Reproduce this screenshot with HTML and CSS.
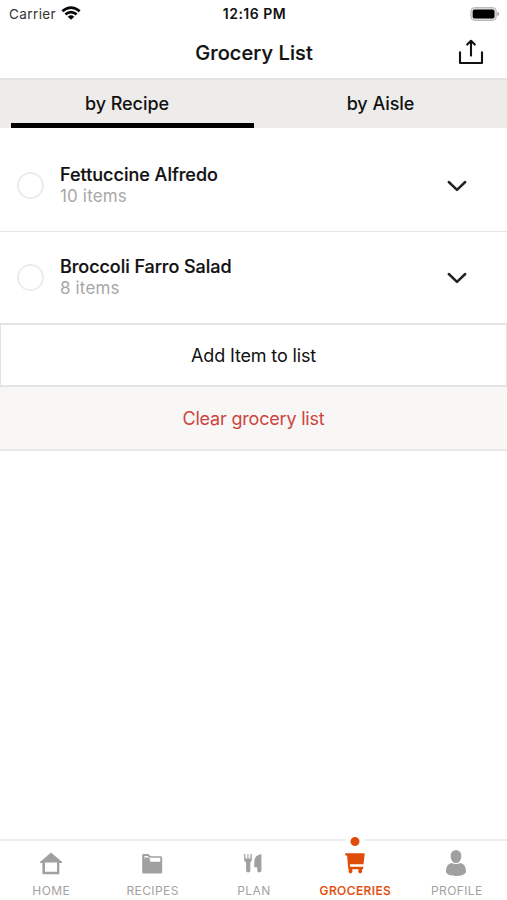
FILE: index.html
```html
<!DOCTYPE html>
<html lang="en">
<head>
<meta charset="utf-8">
<title>Grocery List</title>
<link rel="stylesheet" href="styles.css">
</head>
<body>
<div class="app">
  <div class="status">
    <div class="carrier"><span>Carrier</span>
      <svg width="20" height="14" viewBox="0 0 20 14" fill="none" stroke="#080808" stroke-width="2.7"><path d="M1.3 5.3Q10-2 18.7 5.3M4.4 8.4Q10 3.9 15.6 8.4"/><path d="M10 13.7 6.7 10.7Q10 8 13.3 10.7Z" fill="#080808" stroke="none"/></svg>
    </div>
    <span class="clock">12:16 PM</span>
    <svg class="battery" width="30" height="14" viewBox="0 0 30 14"><rect x=".9" y=".6" width="25.4" height="12.8" rx="3.7" fill="#ddd" stroke="#b5b5b5"/><rect x="2.7" y="2.4" width="21.8" height="9.2" rx="2" fill="#000"/><path d="M27.4 4.8Q29.4 5.4 29.4 7T27.4 9.2Z" fill="#aaa"/></svg>
  </div>
  <header class="header">
    <h1>Grocery List</h1>
    <svg class="share" width="26" height="26" viewBox="0 0 26 26" fill="none" stroke="#111" stroke-width="2.1" stroke-linecap="round" stroke-linejoin="round"><path d="M2 13.3V24H24V13.3M13 16.6V2.3M9.2 5.6 13 1.8 16.8 5.6"/></svg>
  </header>
  <nav class="tabs">
    <div class="tab active"><span>by Recipe</span></div>
    <div class="tab"><span>by Aisle</span></div>
  </nav>
  <main>
    <section class="recipe first">
      <span class="check"></span>
      <div class="info"><h2>Fettuccine Alfredo</h2><p>10 items</p></div>
      <svg class="chevron" width="20" height="12" viewBox="0 0 20 12"><path d="M1.8 2 10 9.9 18.2 2"/></svg>
    </section>
    <section class="recipe">
      <span class="check"></span>
      <div class="info"><h2>Broccoli Farro Salad</h2><p>8 items</p></div>
      <svg class="chevron" width="20" height="12" viewBox="0 0 20 12"><path d="M1.8 2 10 9.9 18.2 2"/></svg>
    </section>
    <div class="add"><span>Add Item to list</span></div>
    <div class="clear"><span>Clear grocery list</span></div>
  </main>
  <nav class="bottom">
    <div class="item">
      <svg width="24" height="28" viewBox="0 0 24 28"><path d="M12 2.5 23.2 12V13H20.3V24.3H3.4V13H1V12ZM6 12.5V21.8H18V12.5Z" fill="#a0a0a0" fill-rule="evenodd"/></svg>
      <span>HOME</span>
    </div>
    <div class="item">
      <svg width="24" height="28" viewBox="0 0 24 28"><path d="M2.2 5.2Q2.2 4 3.4 4H8.2L10.7 6.2H20.6Q22.2 6.2 22.2 7.8V22.3Q22.2 23.5 20.8 23.5H3.4Q2.2 23.5 2.2 22.3Z" fill="#a0a0a0"/><path d="M4.4 6H7.6L9.6 7.8H20.3V11.8H11L9 10H4.4Z" fill="#fff"/><path d="M4.4 7.4H8.5L10.5 9.3 8.9 10.7H4.4Z" fill="#a0a0a0"/></svg>
      <span>RECIPES</span>
    </div>
    <div class="item">
      <svg width="24" height="28" viewBox="0 0 24 28" fill="#a0a0a0"><path d="M3.1 4H4.4V8.5H6.4V4H7.5V8.5H9.4V4H10.8V9.3Q10.8 12 9.3 12.7V20.7Q9.3 22.5 7.2 22.5T5.1 20.7V12.7Q3.1 12 3.1 9.3ZM20.4 4V20.7Q20.4 22.5 18.3 22.5T16.2 20.7V17.3H13.3V12Q13.3 5 20.4 4Z"/></svg>
      <span>PLAN</span>
    </div>
    <div class="item selected">
      <i class="dot"></i>
      <svg width="24" height="28" viewBox="0 0 24 28" fill="#df4e08"><path d="M2.2 3.3H21.1Q21.8 3.3 21.7 4L20.5 14.2H6.9L7.2 16.8H20.3V19.2H18.9V20.3A2 2 0 1 1 15.5 20.3V19.2H9.2V20.3A2 2 0 1 1 5.8 20.3V19.2H5.3L4.1 5.5H2.2Z"/></svg>
      <span>GROCERIES</span>
    </div>
    <div class="item">
      <svg width="24" height="28" viewBox="0 0 24 28" fill="#a0a0a0"><path d="M12 .2C15.5.2 17.5 2.7 17.3 6.2 17.1 10.2 15 13 12 13S6.9 10.2 6.7 6.2C6.5 2.7 8.5.2 12 .2ZM7.6 13.1Q12 15 16.4 13.1C20 13.8 22 17 22 21.3 22 24.2 18 26 12 26S2 24.2 2 21.3C2 17 4 13.8 7.6 13.1Z"/></svg>
      <span>PROFILE</span>
    </div>
  </nav>
</div>
</body>
</html>
```
FILE: styles.css
```css
* { box-sizing: border-box; margin: 0; }
body { background: #fff; color: #111; font-family: Inter, "Liberation Sans", sans-serif; }
.app { height: 900px; display: flex; flex-direction: column; overflow: hidden; }
span, h1, h2, p { white-space: nowrap; }
.status { height: 28px; flex: none; display: grid; grid-template-columns: 1fr auto 1fr; align-items: center; padding: 0 7px 1px 9px; font-size: 13.5px; }
.carrier { display: flex; align-items: center; gap: 5px; color: #333; letter-spacing: .4px; }
.carrier svg { margin-top: -2px; }
.clock { font-weight: 600; font-size: 14px; letter-spacing: .5px; }
.battery { justify-self: end; }
.header { height: 52px; flex: none; display: grid; grid-template-columns: 1fr auto 1fr; align-items: center; padding: 0 23px 3px; border-bottom: 2px solid #e3e3e3; }
.header h1 { grid-column: 2; font-size: 20px; font-weight: 500; letter-spacing: .1px; padding: 2px 0 0 1px; -webkit-text-stroke: .2px #111; }
.share { justify-self: end; }
.tabs { height: 48px; flex: none; display: grid; grid-template-columns: 243px 1fr; padding-left: 11px; background: #edecea; }
.tab { display: flex; justify-content: center; padding-top: 12px; font-size: 18px; line-height: 24px; font-weight: 500; letter-spacing: -.05px; border-bottom: 5px solid transparent; }
.tab.active { border-color: #000; padding-right: 11px; }
main { flex: 1; }
.recipe { height: 91px; display: flex; align-items: center; padding: 0 40px 0 17px; }
.recipe.first { height: 104px; padding-top: 12px; border-bottom: 1px solid #e5e5e5; }
.check { width: 27px; height: 27px; border: 2px solid #eeecea; border-radius: 50%; margin-right: 16px; }
.info { flex: 1; margin-top: -2px; }
.info h2 { font-size: 18px; line-height: 23px; font-weight: 500; -webkit-text-stroke: .2px #111; }
.recipe:not(.first) h2 { letter-spacing: -.05px; }
.info p { color: #a8a8a8; font-size: 17px; line-height: 20px; letter-spacing: .15px; }
.chevron { fill: none; stroke: #222; stroke-width: 2.5; stroke-linecap: round; stroke-linejoin: round; }
.add, .clear { height: 64px; display: flex; align-items: center; justify-content: center; font-size: 18px; letter-spacing: -.15px; }
.add { border: 2px solid #e5e4e4; border-width: 2px 1px; }
.clear { color: #cb4540; background: #f8f7f5; border-bottom: 2px solid #e9e9e8; letter-spacing: -.2px; }
.bottom { height: 61px; flex: none; display: grid; grid-template-columns: repeat(5, 1fr); border-top: 2px solid #ececec; }
.item { display: flex; flex-direction: column; align-items: center; padding-top: 9px; position: relative; color: #a2a2a2; font-size: 12px; letter-spacing: .4px; }
.item span { line-height: 16px; margin-top: 5px; padding-left: 1px; }
.selected { color: #df4e08; font-weight: 500; -webkit-text-stroke: .15px #df4e08; }
.dot { position: absolute; top: -9px; left: 50%; transform: translateX(-50%); width: 19px; height: 19px; border-radius: 50%; border: 5px solid #fff; background: #df4e08; }
```
